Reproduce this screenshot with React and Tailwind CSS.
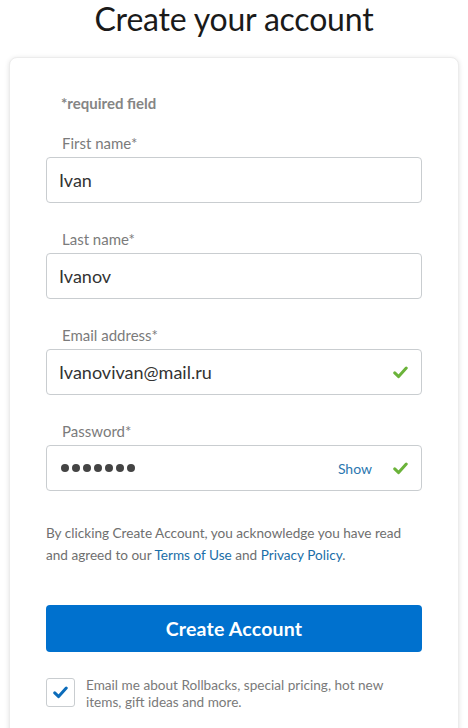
import React, { useState } from "react";

const Check = ({ className }) => (
  <svg viewBox="0 0 16 14" className={className} fill="none">
    <path d="M1.8 7.4 L6 11.4 L14.2 2.2" stroke="currentColor" strokeWidth="3.2" strokeLinecap="round" strokeLinejoin="round" />
  </svg>
);

const Field = ({ label, children }) => (
  <div className="mb-[26px]">
    <div className="pl-[16px] mb-[4px] text-[15px] leading-[20px] text-[#7b7b7b]">{label}</div>
    <div className="h-[46px] flex items-center border border-[#c9cdd0] rounded-[4px] pl-[12px] pr-[13px]">{children}</div>
  </div>
);

const App = () => {
  const [emailMe, setEmailMe] = useState(true);

  return (
    <div className="w-[468px] h-[728px] overflow-hidden bg-white" style={{ fontFamily: "Lato, 'Open Sans', sans-serif" }}>
      <h1 className="h-[36px] pt-[1px] text-center text-[32px] leading-[36px] text-[#1a1a1a] tracking-[-0.2px]">Create your account</h1>

      <div className="mt-[21px] mx-[9px] w-[450px] h-[700px] bg-white border border-[#ececec] rounded-[8px] shadow-[0_1px_5px_rgba(0,0,0,0.12)] px-[36px] pt-[36px]">
        <div className="pl-[15px] text-[15px] leading-[18px] font-bold text-[#858585]">*required field</div>

        <div className="mt-[21px]">
          <Field label="First name*">
            <span className="text-[18px] text-[#333]">Ivan</span>
          </Field>
          <Field label="Last name*">
            <span className="text-[18px] text-[#333]">Ivanov</span>
          </Field>
          <Field label="Email address*">
            <span className="flex-1 text-[18px] text-[#333]">Ivanovivan@mail.ru</span>
            <Check className="w-[15px] h-[13px] text-[#6bb33a]" />
          </Field>
          <div>
            <div className="pl-[16px] mb-[4px] text-[15px] leading-[20px] text-[#7b7b7b]">Password*</div>
            <div className="h-[46px] flex items-center border border-[#c9cdd0] rounded-[4px] pl-[14px] pr-[13px]">
              <div className="flex-1 flex gap-[3px]">
                {[0, 1, 2, 3, 4, 5, 6].map((i) => (
                  <span key={i} className="w-[8px] h-[8px] rounded-full bg-[#444]" />
                ))}
              </div>
              <span className="text-[14px] text-[#2b77b0] mr-[21px]">Show</span>
              <Check className="w-[15px] h-[13px] text-[#6bb33a]" />
            </div>
          </div>
        </div>

        <p className="mt-[31px] text-[13.6px] leading-[22px] text-[#6f6f6f]">
          By clicking Create Account, you acknowledge you have read and agreed to our{" "}
          <a className="text-[#1a6ea8]">Terms of Use</a> and <a className="text-[#1a6ea8]">Privacy Policy</a>.
        </p>

        <button className="mt-[39px] w-full h-[47px] rounded-[4px] bg-[#0071ce] text-white text-[19.5px] font-bold tracking-[0.2px]">
          Create Account
        </button>

        <div className="mt-[26px] flex items-start gap-[11px]">
          <button
            onClick={() => setEmailMe(!emailMe)}
            className="shrink-0 w-[29px] h-[29px] border border-[#c9cdd0] rounded-[3px] flex items-center justify-center"
          >
            {emailMe && <Check className="w-[15px] h-[13px] text-[#0c6cba]" />}
          </button>
          <p className="-mt-[1px] max-w-[310px] text-[13.6px] leading-[17px] text-[#7a7a7a]">
            Email me about Rollbacks, special pricing, hot new items, gift ideas and more.
          </p>
        </div>
      </div>
    </div>
  );
};

export default App;
